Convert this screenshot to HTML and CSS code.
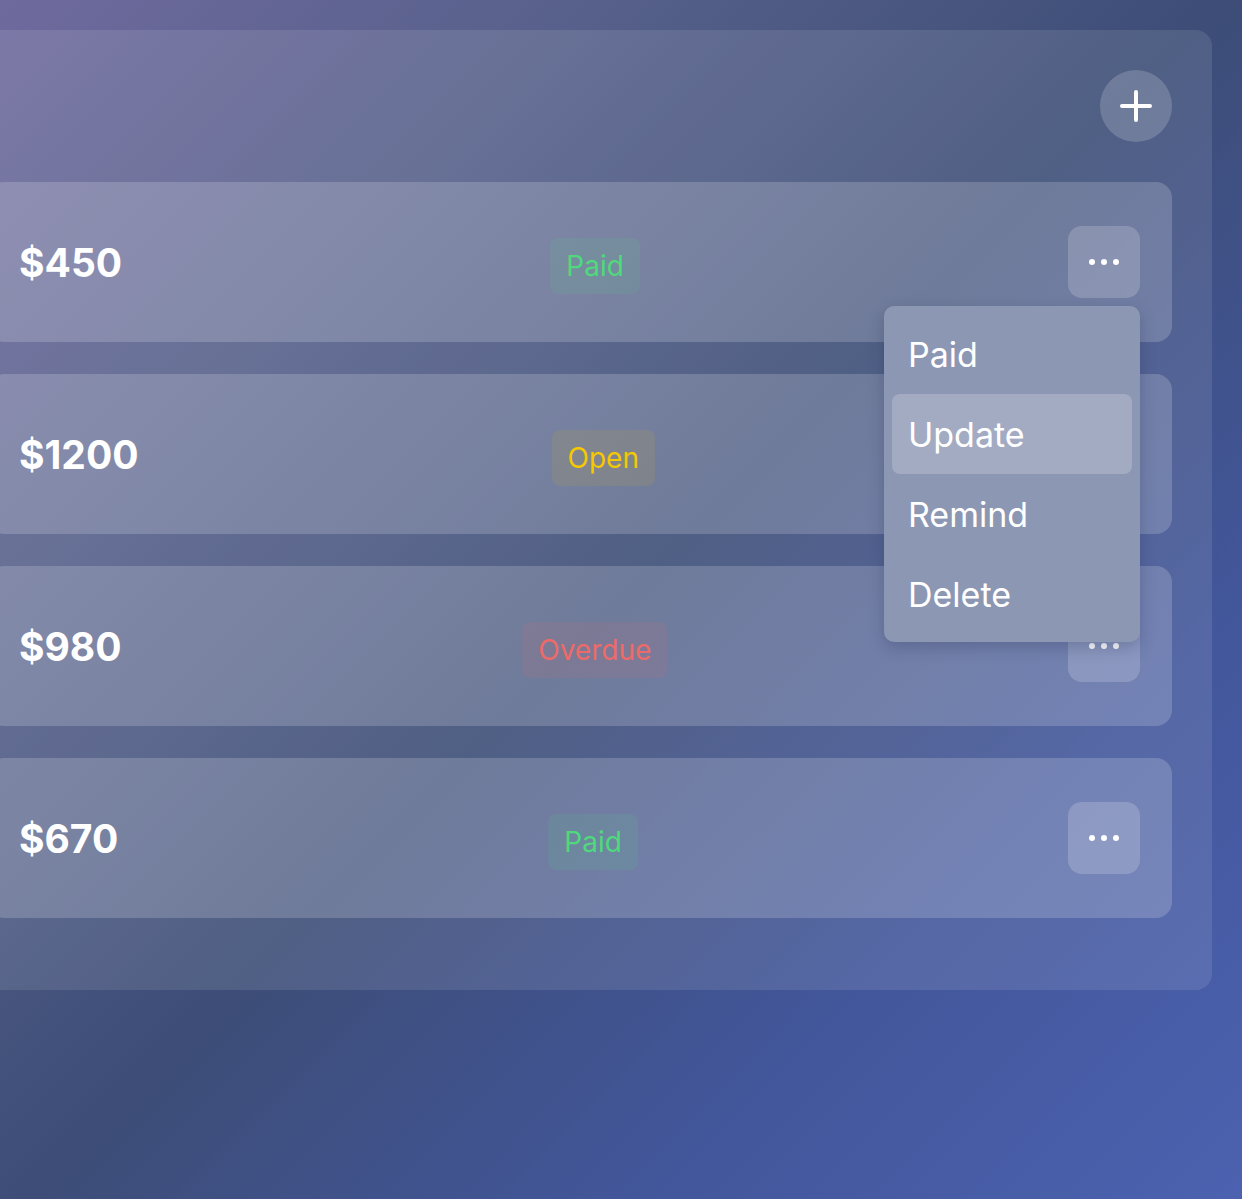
FILE: index.html
```html
<!DOCTYPE html>
<html lang="en">
<head>
<meta charset="utf-8">
<title>Invoices</title>
<link rel="stylesheet" href="styles.css">
</head>
<body>
<main class="page">
  <section class="panel">
    <div class="panel-head">
      <button class="add-btn" aria-label="Add invoice">
        <svg width="34" height="34" viewBox="0 0 34 34"><path d="M17 3v28M3 17h28" stroke="#fff" stroke-width="4" stroke-linecap="round" fill="none"/></svg>
      </button>
    </div>
    <div class="list">
      <div class="row">
        <span class="amount">$450</span>
        <span class="badge paid">Paid</span>
        <div class="actions">
          <button class="more-btn" aria-label="More"><svg width="40" height="8" viewBox="0 0 40 8"><circle cx="8" cy="4" r="3" fill="#fff"/><circle cx="20" cy="4" r="3" fill="#fff"/><circle cx="32" cy="4" r="3" fill="#fff"/></svg></button>
          <ul class="menu">
            <li class="menu-item">Paid</li>
            <li class="menu-item active">Update</li>
            <li class="menu-item">Remind</li>
            <li class="menu-item">Delete</li>
          </ul>
        </div>
      </div>
      <div class="row">
        <span class="amount">$1200</span>
        <span class="badge open">Open</span>
        <div class="actions">
          <button class="more-btn" aria-label="More"><svg width="40" height="8" viewBox="0 0 40 8"><circle cx="8" cy="4" r="3" fill="#fff"/><circle cx="20" cy="4" r="3" fill="#fff"/><circle cx="32" cy="4" r="3" fill="#fff"/></svg></button>
        </div>
      </div>
      <div class="row">
        <span class="amount">$980</span>
        <span class="badge overdue">Overdue</span>
        <div class="actions">
          <button class="more-btn" aria-label="More"><svg width="40" height="8" viewBox="0 0 40 8"><circle cx="8" cy="4" r="3" fill="#fff"/><circle cx="20" cy="4" r="3" fill="#fff"/><circle cx="32" cy="4" r="3" fill="#fff"/></svg></button>
        </div>
      </div>
      <div class="row">
        <span class="amount">$670</span>
        <span class="badge paid">Paid</span>
        <div class="actions">
          <button class="more-btn" aria-label="More"><svg width="40" height="8" viewBox="0 0 40 8"><circle cx="8" cy="4" r="3" fill="#fff"/><circle cx="20" cy="4" r="3" fill="#fff"/><circle cx="32" cy="4" r="3" fill="#fff"/></svg></button>
        </div>
      </div>
    </div>
  </section>
</main>
</body>
</html>
```

FILE: styles.css
```css
* { box-sizing: border-box; }

html, body {
  margin: 0;
  padding: 0;
}

body {
  width: 1242px;
  height: 1199px;
  overflow: hidden;
  font-family: Inter, "Noto Sans", "Liberation Sans", sans-serif;
  color: #fff;
  background: linear-gradient(135deg, #6f6a9e 0%, #56608a 25%, #3d4d77 50%, #42569a 75%, #4c62b0 100%);
}

.page {
  padding-top: 30px;
}

.panel {
  margin-left: -52px;
  width: 1264px;
  padding: 40px 40px 72px;
  border-radius: 16px;
  background: rgba(255, 255, 255, 0.1);
}

.panel-head {
  display: flex;
  justify-content: flex-end;
  margin-bottom: 40px;
}

.add-btn {
  width: 72px;
  height: 72px;
  border: 0;
  padding: 0;
  border-radius: 50%;
  background: rgba(255, 255, 255, 0.18);
  display: flex;
  align-items: center;
  justify-content: center;
}

.list {
  display: flex;
  flex-direction: column;
  gap: 32px;
}

.row {
  height: 160px;
  padding: 0 32px 0 31px;
  border-radius: 16px;
  background: rgba(255, 255, 255, 0.18);
  display: flex;
  align-items: center;
  justify-content: space-between;
}

.amount {
  font-size: 39px;
  font-weight: 700;
  line-height: 48px;
  margin-top: 2px;
}

.badge {
  font-size: 28px;
  line-height: 32px;
  padding: 12px 16px;
  border-radius: 8px;
  margin-top: 8px;
}

.badge.paid {
  color: #4fd97c;
  background: rgba(74, 222, 128, 0.1);
}

.badge.open {
  color: #f5c800;
  background: rgba(240, 190, 0, 0.1);
}

.badge.overdue {
  color: #ee6a68;
  background: rgba(248, 110, 110, 0.1);
}

.actions {
  position: relative;
}

.more-btn {
  width: 72px;
  height: 72px;
  border: 0;
  padding: 0;
  border-radius: 14px;
  background: rgba(255, 255, 255, 0.18);
  display: flex;
  align-items: center;
  justify-content: center;
}

.menu {
  position: absolute;
  top: 80px;
  right: 0;
  z-index: 10;
  width: 256px;
  margin: 0;
  padding: 8px;
  list-style: none;
  border-radius: 10px;
  background: #8c97b3;
  box-shadow: 0 6px 16px rgba(30, 40, 80, 0.25);
}

.menu-item {
  height: 80px;
  padding: 0 16px;
  display: flex;
  align-items: center;
  font-size: 34px;
  border-radius: 8px;
  color: #fff;
}

.menu-item.active {
  background: rgba(255, 255, 255, 0.2);
}
```
